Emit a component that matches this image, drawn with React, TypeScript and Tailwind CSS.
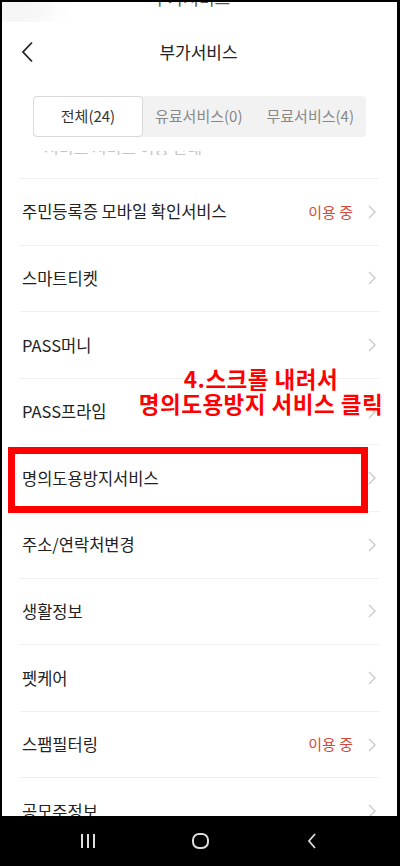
const rows: { name: string; using?: boolean }[] = [
  { name: '주민등록증 모바일 확인서비스', using: true },
  { name: '스마트티켓' },
  { name: 'PASS머니' },
  { name: 'PASS프라임' },
  { name: '명의도용방지서비스' },
  { name: '주소/연락처변경' },
  { name: '생활정보' },
  { name: '펫케어' },
  { name: '스팸필터링', using: true },
  { name: '공모주정보' },
]

function Chevron() {
  return (
    <svg width="10" height="16" viewBox="0 0 10 16" className="shrink-0">
      <path d="M2 2 L8 8 L2 14" fill="none" stroke="#c9c9c9" strokeWidth="1.4" />
    </svg>
  )
}

export default function App() {
  return (
    <div
      className="relative w-[400px] h-[866px] bg-black pt-[2px] pl-[2px] pr-[3px] flex flex-col overflow-hidden"
      style={{ fontFamily: '"Noto Sans CJK KR", "Noto Sans", sans-serif' }}
    >
      <div className="flex-1 min-h-0 bg-white flex flex-col overflow-hidden">
        {/* clipped status text */}
        <div className="h-[20px] shrink-0 relative overflow-hidden">
          <div className="absolute left-[-20px] top-[-14px] w-[70px] h-[40px] rounded-full bg-[#f4f4f4] blur-md" />
          <div className="absolute left-[150px] top-[-17px] text-[17px] text-[#555]">부가서비스</div>
        </div>

        {/* header */}
        <div className="h-[60px] shrink-0 flex items-center relative">
          <svg width="14" height="22" viewBox="0 0 14 22" className="ml-[19px]">
            <path d="M11 1.5 L2 11 L11 20.5" fill="none" stroke="#222" strokeWidth="1.8" />
          </svg>
          <div className="absolute inset-x-0 text-center text-[17px] text-[#222] -ml-[2px]">부가서비스</div>
        </div>

        {/* tabs */}
        <div className="mt-[14px] mx-[31px] h-[41px] shrink-0 rounded-[4px] bg-[#f2f2f2] flex items-stretch text-[15px]">
          <div className="w-[110px] rounded-[4px] border border-[#d9d9d9] bg-white flex items-center justify-center text-[#333]">
            전체(24)
          </div>
          <div className="flex-1 flex items-center justify-center text-[#888]">유료서비스(0)</div>
          <div className="flex-1 flex items-center justify-center text-[#888]">무료서비스(4)</div>
        </div>

        {/* partially hidden row */}
        <div className="h-[41px] shrink-0 relative overflow-hidden">
          <div className="absolute left-[42px] top-[14px] h-[4px] overflow-hidden w-[160px]">
            <div className="-mt-[14px] text-[16px] text-[#c4c4c4] leading-[20px]">서비스 서비스 이용 안내 안내</div>
          </div>
        </div>

        {/* list */}
        <div className="mx-[18px] shrink-0 flex flex-col">
          {rows.map((r) => (
            <div
              key={r.name}
              className="h-[66.6px] shrink-0 border-t border-[#efefef] flex items-center pl-[2px] pr-[2px]"
            >
              <div className="flex-1 text-[16.5px] text-[#222]">{r.name}</div>
              {r.using && <div className="text-[15px] text-[#d24a3e] mr-[14px]">이용 중</div>}
              <Chevron />
            </div>
          ))}
        </div>
      </div>

      {/* nav bar */}
      <div className="h-[50px] shrink-0 bg-black flex items-center justify-center -ml-[2px] -mr-[3px]">
        <div className="w-[112px] flex justify-center">
          <div className="flex gap-[4px] h-[14px]">
            <div className="w-[2px] bg-[#ddd]" />
            <div className="w-[2px] bg-[#ddd]" />
            <div className="w-[2px] bg-[#ddd]" />
          </div>
        </div>
        <div className="w-[112px] flex justify-center">
          <div className="w-[17px] h-[16px] rounded-[7px] border-[2px] border-[#ddd]" />
        </div>
        <div className="w-[112px] flex justify-center">
          <svg width="10" height="16" viewBox="0 0 10 16">
            <path d="M8 1 L2 8 L8 15" fill="none" stroke="#ddd" strokeWidth="1.8" />
          </svg>
        </div>
      </div>

      {/* annotation */}
      <div className="absolute left-[130px] top-[366px] w-[262px] text-center text-[22.5px] font-bold leading-[25px] text-[#ff0000] tracking-[0.5px]">
        <div>4.스크롤 내려서</div>
        <div>명의도용방지 서비스 클릭</div>
      </div>
      <div className="absolute left-[8px] top-[447px] w-[360px] h-[66px] border-[7px] border-[#ff0000]" />
    </div>
  )
}
